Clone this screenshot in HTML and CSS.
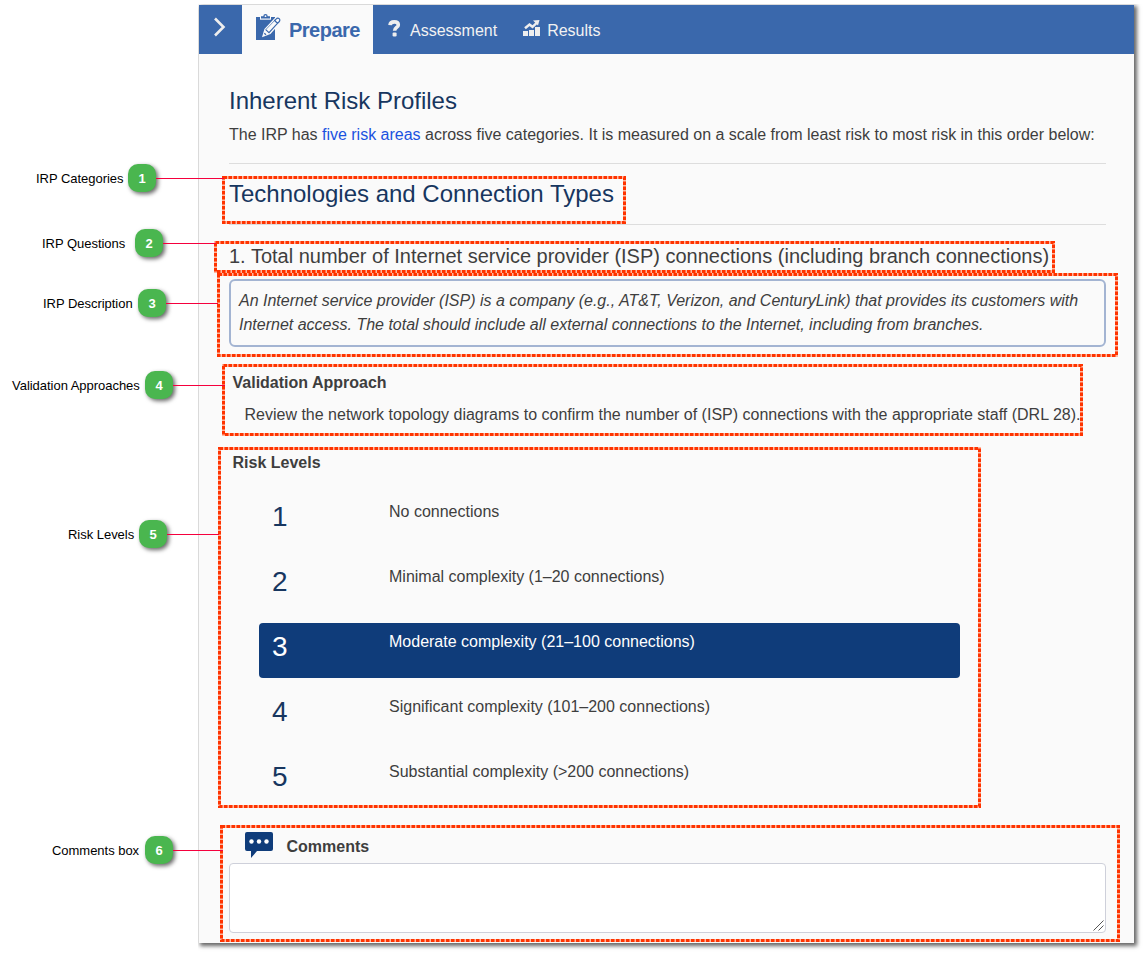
FILE: index.html
```html
<!DOCTYPE html>
<html lang="en">
<head>
<meta charset="utf-8">
<title>Inherent Risk Profiles</title>
<link rel="stylesheet" href="styles.css">
</head>
<body>
<main class="panel">
  <nav class="nav">
    <button class="nav-toggle" aria-label="Expand">
      <svg width="14" height="20" viewBox="0 0 14 20"><path d="M2 1.500 10.500 10 2 18.500" fill="none" stroke="#eee" stroke-width="2.600"/></svg>
    </button>
    <a class="tab tab-active">
      <svg class="icon-clip" width="26" height="28" viewBox="0 0 26 28">
        <path d="M0 4h19v23H0z" fill="#3a68ac"/>
        <path d="M4 3.500h11v3.200H4z" fill="#fafafa"/>
        <path d="M5 5.500V3.300h2.300a2.200 2.200 0 0 1 4.400 0H14v2.200z" fill="#3a68ac"/>
        <circle cx="9.500" cy="3.200" r=".9" fill="#fafafa"/>
        <path d="M6 24.200 8.400 16 19 4.800a3.200 3.200 0 0 1 5.600 4.700L14.500 21z" fill="#fafafa"/>
        <path d="M18.600 7.500 20.300 5.800a1.700 1.700 0 0 1 3 2.700L21.500 10.300zM18.600 7.500l2.900 2.800-8.500 9.300-3.300-3" fill="none" stroke="#3a68ac" stroke-width="1.200"/>
        <path d="M9.700 16.700 18.600 7.500" fill="none" stroke="#3a68ac" stroke-width=".7"/>
        <path d="M8.300 20.300l1.700 1.500" fill="none" stroke="#3a68ac" stroke-width="1.200"/>
      </svg>
      <span>Prepare</span>
    </a>
    <a class="tab tab-assess">
      <svg width="13" height="17" viewBox="0 0 13 17"><path d="M2 5.200C2.200 2.800 4 1.900 6.300 1.900c2.500 0 4 1.100 4 3 0 2.600-3.700 2.600-3.700 5.900" fill="none" stroke="#eee" stroke-width="3.600"/><rect x="4.600" y="12.400" width="4" height="4" rx="1.200" fill="#eee"/></svg>
      <span>Assessment</span>
    </a>
    <a class="tab tab-results">
      <svg width="18" height="17" viewBox="0 0 18 17"><path d="M0 11h5v5H0zM6 10h5v6H6zM12 7h5v9h-5z" fill="#eee"/><path d="M2 8.300 6.500 4.500 9.500 6.800 14 2.700" fill="none" stroke="#eee" stroke-width="2.500"/><path d="M10 .6 16.500 0 15 5.500z" fill="#eee"/></svg>
      <span>Results</span>
    </a>
  </nav>
  <div class="content">
    <h1 class="title">Inherent Risk Profiles</h1>
    <p class="intro">The IRP has <a class="link">five risk areas</a> across five categories. It is measured on a scale from least risk to most risk in this order below:</p>
    <h2 class="category">Technologies and Connection Types</h2>
    <h3 class="question">1. Total number of Internet service provider (ISP) connections (including branch connections)</h3>
    <p class="description">An Internet service provider (ISP) is a company (e.g., AT&amp;T, Verizon, and CenturyLink) that provides its customers with<br>Internet access. The total should include all external connections to the Internet, including from branches.</p>
    <h4 class="label label-validation">Validation Approach</h4>
    <p class="validation">Review the network topology diagrams to confirm the number of (ISP) connections with the appropriate staff (DRL 28).</p>
    <h4 class="label label-risk">Risk Levels</h4>
    <div class="levels">
      <div class="level"><span class="num">1</span><span>No connections</span></div>
      <div class="level"><span class="num">2</span><span>Minimal complexity (1–20 connections)</span></div>
      <div class="level level-on"><span class="num">3</span><span>Moderate complexity (21–100 connections)</span></div>
      <div class="level"><span class="num">4</span><span>Significant complexity (101–200 connections)</span></div>
      <div class="level"><span class="num">5</span><span>Substantial complexity (&gt;200 connections)</span></div>
    </div>
    <div class="comments-head">
      <svg width="28" height="26" viewBox="0 0 28 26"><path d="M2 0h24a2 2 0 0 1 2 2v15a2 2 0 0 1-2 2H12l-6 7v-7H2a2 2 0 0 1-2-2V2a2 2 0 0 1 2-2z" fill="#0f3c7a"/><g fill="#fff"><circle cx="6.500" cy="9.500" r="2.200"/><circle cx="14" cy="9.500" r="2.200"/><circle cx="21.500" cy="9.500" r="2.200"/></g></svg>
      <h4 class="label">Comments</h4>
    </div>
    <div class="comment-box">
      <svg width="11" height="11" viewBox="0 0 11 11"><path d="M.5 10.500l10-10M5.500 10.500l5-5" stroke="#555" stroke-width="1"/></svg>
    </div>
  </div>
</main>

<svg class="marks" width="1143" height="953" viewBox="0 0 1143 953">
  <g class="mark-base">
    <rect x="223.500" y="177.500" width="401" height="45"/>
    <rect x="215.500" y="242.500" width="838" height="29"/>
    <rect x="218.500" y="274.500" width="898" height="81"/>
    <rect x="223.500" y="365.500" width="858" height="69"/>
    <rect x="219.500" y="448.500" width="760" height="358"/>
    <rect x="221.500" y="826.500" width="897" height="114"/>
  </g>
  <g class="mark-dash">
    <rect x="223.500" y="177.500" width="401" height="45"/>
    <rect x="215.500" y="242.500" width="838" height="29"/>
    <rect x="218.500" y="274.500" width="898" height="81"/>
    <rect x="223.500" y="365.500" width="858" height="69"/>
    <rect x="219.500" y="448.500" width="760" height="358"/>
    <rect x="221.500" y="826.500" width="897" height="114"/>
  </g>
</svg>

<div class="callout c1"><span class="callout-text">IRP Categories</span><b class="badge">1</b><i class="line"></i></div>
<div class="callout c2"><span class="callout-text">IRP Questions</span><b class="badge">2</b><i class="line"></i></div>
<div class="callout c3"><span class="callout-text">IRP Description</span><b class="badge">3</b><i class="line"></i></div>
<div class="callout c4"><span class="callout-text">Validation Approaches</span><b class="badge">4</b><i class="line"></i></div>
<div class="callout c5"><span class="callout-text">Risk Levels</span><b class="badge">5</b><i class="line"></i></div>
<div class="callout c6"><span class="callout-text">Comments box</span><b class="badge">6</b><i class="line"></i></div>
</body>
</html>
```

FILE: styles.css
```css
* { box-sizing: border-box; }
body {
  margin: 0;
  height: 953px;
  padding: 5px 9px 10px 199px;
  overflow: hidden;
  background: #fff;
  color: #3e3e3e;
  font: 16px/24px "Liberation Sans", Arial, sans-serif;
}
h1, h2, h3, h4, p { margin: 0; font-weight: 400; white-space: nowrap; }
svg { display: block; flex: none; }

.panel {
  height: 938px;
  background: #fafafa;
  box-shadow: 2px 2px 4px 1px rgba(0, 0, 0, .6);
  clip-path: inset(-1px -9px -9px -1px);
}
.nav { display: flex; height: 49px; background: #3a68ac; color: #f2f2f2; }
.nav-toggle {
  width: 43px; padding: 0 0 5px 14px; border: 0;
  background: none; display: flex; align-items: center;
}
.tab { display: flex; align-items: center; white-space: nowrap; }
.tab-active {
  width: 131px; padding: 1px 0 0 14px; gap: 7px;
  background: #fafafa; color: #3a68ac;
  font-size: 20px; font-weight: 700; letter-spacing: -.5px;
}
.icon-clip { margin: -6px 0 0; }
.tab-assess { padding: 3px 0 0 15px; gap: 9px; }
.tab-assess svg { margin-top: -6px; }
.tab-results { padding: 3px 0 0 26px; gap: 6px; }
.tab-results svg { margin-top: -5px; }

.content { padding: 32px 28px 0 30px; }
.title, .category { color: #17365f; font-size: 24px; line-height: 30px; }
.title, .intro, .category { letter-spacing: -.008px; }
.intro { margin-top: 7px; padding-bottom: 16px; border-bottom: 1px solid #ddd; }
.link { color: #1a52e0; }
.category { padding: 15px 0 15px; border-bottom: 1px solid #ddd; }
.question { margin-top: 18px; font-size: 20px; line-height: 26px; }
.description {
  height: 68px; margin-top: 10px; padding: 8px 8px 6px;
  border: 2px solid #a3b4d2; border-radius: 6px;
  font-style: italic;
}
.label { font-weight: 700; }
.label-validation { margin: 24px 0 0 3.500px; }
.validation { margin: 8px 0 0 15.500px; }
.label-risk { margin: 24px 0 0 3.500px; }
.levels { display: grid; gap: 10px; margin: 18px 146px 0 30px; }
.level { display: flex; height: 55px; padding: 7px 13px; border-radius: 4px; }
.num { width: 117px; margin-top: -1px; color: #17365f; font-size: 28px; line-height: 36px; }
.level-on, .level-on .num { background: #0f3c7a; color: #fff; }
.comments-head { display: flex; gap: 13.500px; height: 31px; margin: 24px 0 0 16px; }
.comments-head .label { padding-top: 3px; }
.comment-box {
  display: flex; align-items: flex-end; justify-content: flex-end;
  height: 70px; padding: 1px; border: 1px solid #ced0da;
  border-radius: 4px; background: #fff;
}

.marks { position: absolute; left: 0; top: 0; }
.marks rect { fill: none; stroke-width: 3; }
.mark-base rect { stroke: #ffb79f; }
.mark-dash rect { stroke: #ff3300; stroke-dasharray: 3.500 1.500; }

.callout {
  position: absolute; display: flex; align-items: center; height: 28px;
  color: #000; font-size: 13px; line-height: 16px; white-space: nowrap;
}
.callout-text { flex: none; padding-top: 2px; letter-spacing: -.03px; }
.badge {
  width: 28px; height: 28px; flex: none; margin-left: auto;
  border-radius: 10px; background: #4ab64f; color: #fff;
  line-height: 29px; text-align: center;
  box-shadow: 2px 2px 4px rgba(0, 0, 0, .6);
}
.line { flex: none; height: 1px; background: #f5003d; }
.c1 { left: 36px; top: 164px; }
.c1 .callout-text { width: 92px; }
.c1 .line { width: 68px; }
.c2 { left: 42px; top: 229px; }
.c2 .callout-text { width: 93px; }
.c2 .line { width: 53px; }
.c3 { left: 43px; top: 289px; }
.c3 .callout-text { width: 95px; }
.c3 .line { width: 52px; }
.c4 { left: 12px; top: 371px; }
.c4 .callout-text { width: 133px; }
.c4 .line { width: 52px; }
.c5 { left: 68px; top: 520px; }
.c5 .callout-text { width: 71px; }
.c5 .line { width: 52px; }
.c6 { left: 52px; top: 836px; }
.c6 .callout-text { width: 93px; }
.c6 .line { width: 50px; }
```
